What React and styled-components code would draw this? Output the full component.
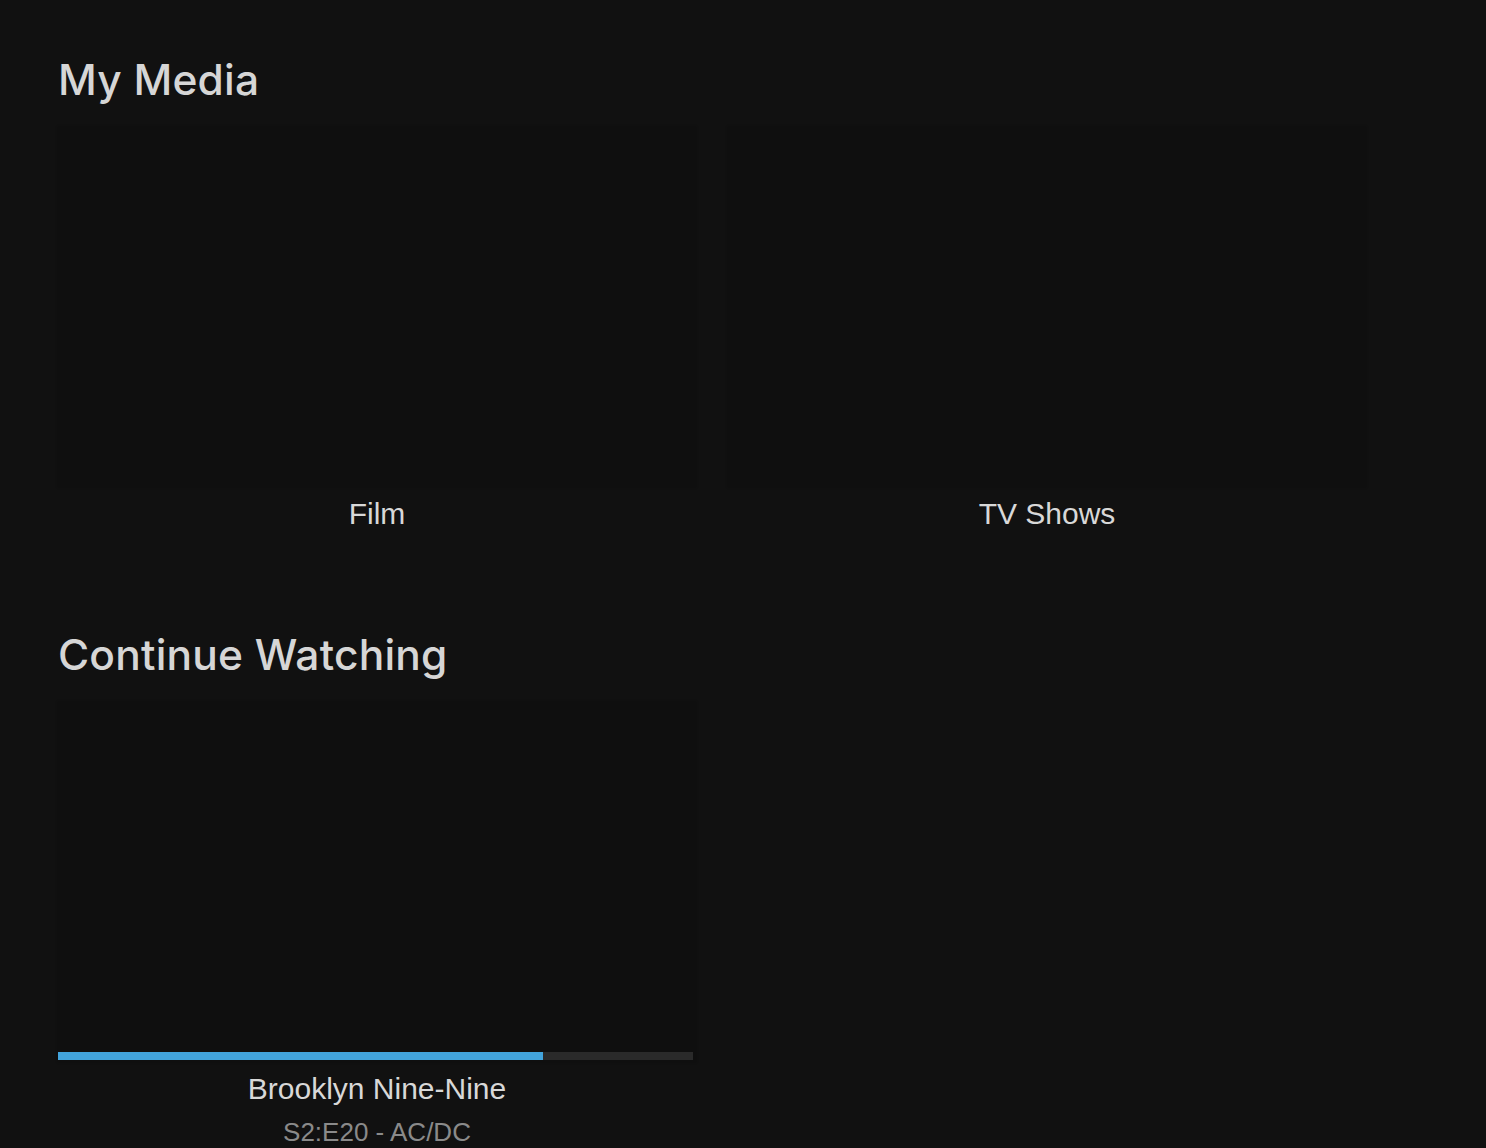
import React from 'react';
import styled, { createGlobalStyle } from 'styled-components';

const GlobalStyle = createGlobalStyle`
  html, body {
    margin: 0;
    padding: 0;
    background: #111111;
  }
  body {
    font-family: "Liberation Sans", Arial, sans-serif;
    color: #d6d6d6;
  }
`;

const Page = styled.div`
  padding: 52px 58px 0;
  min-height: 1148px;
  box-sizing: border-box;
`;

const Section = styled.section`
  margin-bottom: ${p => p.spacing || 0}px;
`;

const Heading = styled.h2`
  margin: 0 0 19px;
  font-family: Inter, "Noto Sans", sans-serif;
  font-weight: 500;
  font-size: 42.5px;
  line-height: 56px;
  color: #d6d6d6;
  letter-spacing: 0.2px;
`;

const Row = styled.div`
  display: flex;
  gap: 32px;
`;

const Tile = styled.div`
  width: 638px;
  display: flex;
  flex-direction: column;
  align-items: center;
`;

const Art = styled.div`
  position: relative;
  width: 638px;
  height: 360px;
  background: #0f0f0f;
  box-shadow: 0 0 3px rgba(0, 0, 0, 0.3);
`;

const Track = styled.div`
  position: absolute;
  left: 0;
  right: 3px;
  bottom: 2px;
  height: 8px;
  background: #2a2a2a;
`;

const Fill = styled.div`
  height: 100%;
  background: #42a4dc;
`;

const Label = styled.div`
  margin-top: 10px;
  font-size: 30px;
  line-height: 34px;
  color: #d8d8d8;
`;

const Sub = styled.div`
  margin-top: 11px;
  font-size: 26px;
  line-height: 30px;
  color: #8a8a8a;
`;

export default function App() {
  return (
    <Page>
      <GlobalStyle />
      <Section spacing={96}>
        <Heading>My Media</Heading>
        <Row>
          <Tile>
            <Art />
            <Label>Film</Label>
          </Tile>
          <Tile>
            <Art />
            <Label>TV Shows</Label>
          </Tile>
        </Row>
      </Section>
      <Section>
        <Heading>Continue Watching</Heading>
        <Row>
          <Tile>
            <Art>
              <Track>
                <Fill style={{ width: '76.4%' }} />
              </Track>
            </Art>
            <Label>Brooklyn Nine-Nine</Label>
            <Sub>S2:E20 - AC/DC</Sub>
          </Tile>
        </Row>
      </Section>
    </Page>
  );
}
